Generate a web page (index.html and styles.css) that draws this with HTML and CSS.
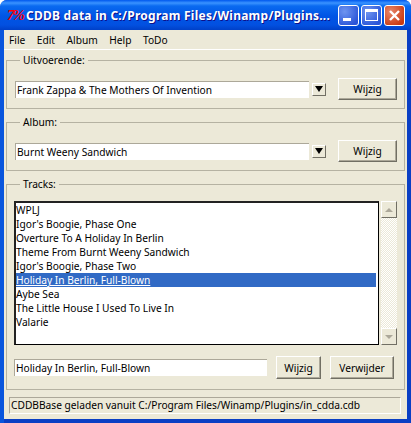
FILE: index.html
```html
<!DOCTYPE html>
<html lang="en">
<head>
    <meta charset="UTF-8">
    <title>CDDB data</title>
    <link rel="stylesheet" href="styles.css">
</head>
<body>
    <div class="window">
        <div class="titlebar">
            <span class="app-icon">7%</span>
            <span class="title">CDDB data in C:/Program Files/Winamp/Plugins...</span>
            <span class="win-btn"><i class="min-mark"></i></span>
            <span class="win-btn"><i class="max-mark"></i></span>
            <span class="win-btn close">
                <svg width="13" height="13" viewBox="0 0 13 13"><path d="M2 2L11 11M11 2L2 11" stroke="#fff" stroke-width="2.4"/></svg>
            </span>
        </div>
        <div class="client">
            <div class="menubar">
                <span>File</span>
                <span>Edit</span>
                <span>Album</span>
                <span>Help</span>
                <span>ToDo</span>
            </div>
            <div class="content">
                <fieldset class="group">
                    <legend>Uitvoerende:</legend>
                    <div class="row">
                        <div class="field combo">Frank Zappa &amp; The Mothers Of Invention</div>
                        <span class="drop"><i></i></span>
                        <a class="btn">Wijzig</a>
                    </div>
                </fieldset>
                <fieldset class="group">
                    <legend>Album:</legend>
                    <div class="row">
                        <div class="field combo">Burnt Weeny Sandwich</div>
                        <span class="drop"><i></i></span>
                        <a class="btn">Wijzig</a>
                    </div>
                </fieldset>
                <fieldset class="group tracks">
                    <legend>Tracks:</legend>
                    <div class="list-row">
                        <ul class="list">
                            <li>WPLJ</li>
                            <li>Igor's Boogie, Phase One</li>
                            <li>Overture To A Holiday In Berlin</li>
                            <li>Theme From Burnt Weeny Sandwich</li>
                            <li>Igor's Boogie, Phase Two</li>
                            <li class="selected">Holiday In Berlin, Full-Blown</li>
                            <li>Aybe Sea</li>
                            <li>The Little House I Used To Live In</li>
                            <li>Valarie</li>
                        </ul>
                        <div class="scrollbar">
                            <span class="scroll-btn"><i class="up"></i></span>
                            <span class="scroll-track"></span>
                            <span class="scroll-btn"><i class="down"></i></span>
                        </div>
                    </div>
                    <div class="row edit-row">
                        <div class="field track-name">Holiday In Berlin, Full-Blown</div>
                        <a class="btn">Wijzig</a>
                        <a class="btn">Verwijder</a>
                    </div>
                </fieldset>
            </div>
            <div class="statusbar">CDDBBase geladen vanuit C:/Program Files/Winamp/Plugins/in_cdda.cdb</div>
        </div>
    </div>
</body>
</html>
```

FILE: styles.css
```css
html, body {
    margin: 0;
    padding: 0;
}
body {
    width: 411px;
    height: 423px;
    overflow: hidden;
    font-family: "Noto Sans", sans-serif;
    font-size: 10.2px;
    color: #000;
}
.window {
    height: 423px;
    box-sizing: border-box;
    display: flex;
    flex-direction: column;
    border-radius: 7px 7px 0 0;
    padding: 0 4px 4px;
    background: linear-gradient(to right, #0855dd 0, #0855dd 4px, #0a3fc4 4px, #0a3fc4 100%);
}
.titlebar {
    height: 30px;
    flex: none;
    margin: 0 -4px;
    padding: 0 6px 0 7px;
    display: flex;
    align-items: center;
    border-radius: 7px 7px 0 0;
    background: linear-gradient(to bottom, #0058ee 0, #3a93ff 3px, #0a6af0 6px, #0055e5 16px, #0250e0 25px, #0040c8 30px);
    color: #fff;
}
.app-icon {
    width: 19px;
    font: italic bold 15px "Liberation Serif", serif;
    letter-spacing: -2px;
    color: #ff0000;
    flex: none;
}
.title {
    flex: 1;
    font-weight: bold;
    font-size: 12px;
    letter-spacing: 0.25px;
    white-space: nowrap;
    overflow: hidden;
    text-shadow: 1px 1px 0 #0f1089;
}
.win-btn {
    width: 21px;
    height: 21px;
    margin-left: 2px;
    flex: none;
    box-sizing: border-box;
    border: 1px solid #fff;
    border-radius: 3px;
    background: radial-gradient(circle at 30% 30%, #6f95f0, #2a55d8 80%);
    display: flex;
    align-items: center;
    justify-content: center;
    position: relative;
}
.close {
    background: radial-gradient(circle at 30% 30%, #e8866a, #c93a12 80%);
}
.min-mark {
    width: 8px;
    height: 3px;
    background: #fff;
    position: absolute;
    left: 4px;
    bottom: 4px;
}
.max-mark {
    width: 13px;
    height: 12px;
    box-sizing: border-box;
    border: 1px solid #fff;
    border-top-width: 3px;
}
.client {
    flex: 1;
    display: flex;
    flex-direction: column;
    background: #ece9d8;
    min-height: 0;
}
.menubar {
    height: 20px;
    flex: none;
    box-sizing: border-box;
    display: flex;
    align-items: center;
    padding-left: 5px;
    gap: 11.5px;
    border-bottom: 1px solid #fff;
}
.content {
    flex: 1;
    padding: 4px 2px 7px;
    display: flex;
    flex-direction: column;
}
.group {
    margin: 0 0 7px;
    padding: 0 7px 0 8px;
    min-width: 0;
    height: 55px;
    box-sizing: border-box;
    border: 1px solid #b5b2a2;
}
.group legend {
    margin-left: 5px;
    padding: 0 3px;
    line-height: 13px;
}
.row {
    display: flex;
    align-items: center;
    padding-top: 11px;
}
.field {
    background: #fff;
    height: 17px;
    line-height: 16px;
    padding-left: 1px;
    box-sizing: border-box;
    white-space: nowrap;
    flex: none;
    border-top: 1px solid #aca899;
    border-left: 1px solid #aca899;
}
.combo {
    width: 294px;
}
.drop {
    width: 14px;
    height: 13px;
    margin-left: 3px;
    flex: none;
    box-sizing: border-box;
    background: #ece9d8;
    border: 1px solid;
    border-color: #fff #716f64 #716f64 #fff;
    display: flex;
    align-items: center;
    justify-content: center;
}
.drop i {
    width: 0;
    height: 0;
    border-left: 4px solid transparent;
    border-right: 4px solid transparent;
    border-top: 6px solid #000;
}
.btn {
    display: flex;
    align-items: center;
    justify-content: center;
    height: 22px;
    margin-left: 12px;
    width: 59px;
    flex: none;
    box-sizing: border-box;
    background: #ece9d8;
    border: 1px solid;
    border-color: #fff #716f64 #716f64 #fff;
    box-shadow: inset -1px -1px 0 #aca899;
}
.tracks {
    flex: 1;
    height: auto;
    margin-bottom: 0;
}
.list-row {
    display: flex;
    margin: 10px 0 0 -1px;
}
.list {
    list-style: none;
    margin: 0;
    padding: 0 2px 0 0;
    width: 365px;
    height: 144px;
    box-sizing: border-box;
    flex: none;
    background: #fff;
    border-style: solid;
    border-width: 2px 1px 1px 2px;
    border-color: #222 #000 #000 #222;
}
.list li {
    height: 14px;
    line-height: 14px;
    white-space: nowrap;
}
.selected {
    background: #316ac5;
    color: #fff;
    text-decoration: underline;
}
.scrollbar {
    width: 16px;
    margin-left: 2px;
    flex: none;
    height: 144px;
    display: flex;
    flex-direction: column;
}
.scroll-btn {
    height: 17px;
    flex: none;
    box-sizing: border-box;
    background: #ece9d8;
    border: 1px solid;
    border-color: #fff #716f64 #716f64 #fff;
    display: flex;
    align-items: center;
    justify-content: center;
}
.scroll-btn i {
    width: 0;
    height: 0;
    border-left: 4px solid transparent;
    border-right: 4px solid transparent;
}
.up {
    border-bottom: 4px solid #aca899;
}
.down {
    border-top: 4px solid #aca899;
}
.scroll-track {
    flex: 1;
    background: repeating-conic-gradient(#fff 0 25%, #ece9d8 0 50%) 0 0 / 2px 2px;
}
.edit-row {
    margin-left: -1px;
    padding-top: 11px;
}
.track-name {
    width: 253px;
}
.edit-row .btn {
    margin-left: 9px;
    width: 45px;
    height: 23px;
}
.edit-row .btn:last-child {
    width: 64px;
}
.statusbar {
    height: 17px;
    flex: none;
    margin: 0 6px 5px 5px;
    padding-left: 1px;
    box-sizing: border-box;
    line-height: 15px;
    white-space: nowrap;
    overflow: hidden;
    border: 1px solid;
    border-color: #aca899 #fff #fff #aca899;
}
```
